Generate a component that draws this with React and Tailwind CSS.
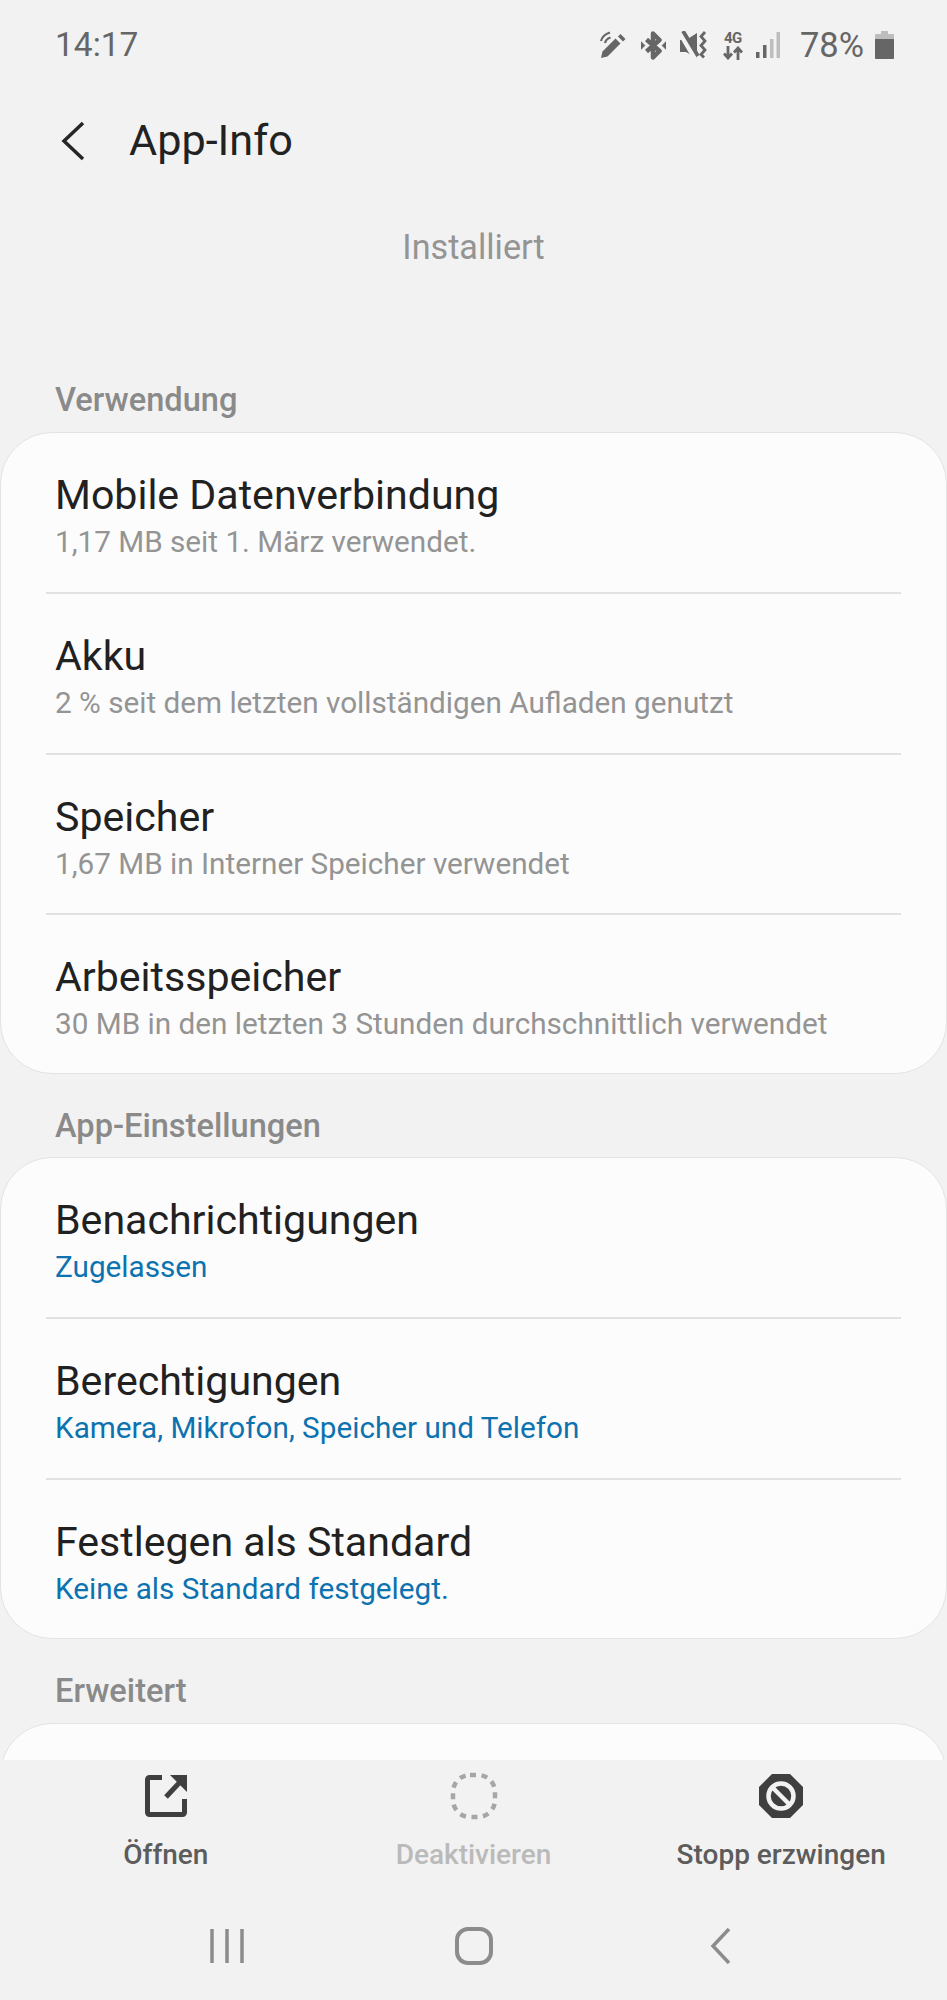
const rows1 = [
  ["Mobile Datenverbindung", "1,17 MB seit 1. März verwendet."],
  ["Akku", "2 % seit dem letzten vollständigen Aufladen genutzt"],
  ["Speicher", "1,67 MB in Interner Speicher verwendet"],
  ["Arbeitsspeicher", "30 MB in den letzten 3 Stunden durchschnittlich verwendet"],
];
const rows2 = [
  ["Benachrichtigungen", "Zugelassen"],
  ["Berechtigungen", "Kamera, Mikrofon, Speicher und Telefon"],
  ["Festlegen als Standard", "Keine als Standard festgelegt."],
];

function Card({ rows, blue }) {
  return (
    <div className="rounded-[52px] border border-[#e3e3e3] bg-[#fcfcfc] px-[54px]">
      {rows.map(([t, s], i) => (
        <div key={t} className={"relative pt-[36px] " + (i < rows.length - 1 ? "h-[160.8px]" : "h-[158px]")}>
          <div className="text-[41.1px] leading-[52px] text-[#212121]">{t}</div>
          <div className={"text-[29.7px] leading-[42px] " + (blue ? "text-[#0d72b0]" : "text-[#949494]")}>{s}</div>
          {i < rows.length - 1 && <div className="absolute bottom-0 left-[-9px] right-[-9px] h-[2px] bg-[#e2e2e2]" />}
        </div>
      ))}
    </div>
  );
}

function Label({ children, className }) {
  return <div className={"px-[55px] text-[32.6px] leading-[40px] font-medium text-[#8a8a8a] " + className}>{children}</div>;
}

function StatusIcons() {
  return (
    <div className="flex items-center">
      <svg width="28" height="28" viewBox="0 0 28 28" className="mr-[13px]" fill="#666">
        <path d="M1 27l1.500-6.500 13-13 5 5-13 13z" />
        <path d="M18 5.500l2.500-2.500 5 5-2.500 2.500z" />
        <path d="M1 10C2 6 5 3 10 1.500" fill="none" stroke="#666" strokeWidth="2.200" />
        <path d="M5 12C5.500 9.500 7.500 7.500 10.500 6.500" fill="none" stroke="#666" strokeWidth="2.200" />
      </svg>
      <svg width="25" height="29" viewBox="0 0 25 29" className="mr-[14px]" fill="none" stroke="#666">
        <path d="M5.500 8.500l13 11.500-6.500 6.500V2.500l6.500 6.500L5.500 20.500" strokeWidth="4.500" strokeLinejoin="round" />
        <path d="M0 10.500l4 4-4 4zM25 10.500l-4 4 4 4z" fill="#666" strokeWidth="0.500" />
      </svg>
      <svg width="28" height="28" viewBox="0 0 28 28" className="mr-[15px]" fill="#666">
        <path d="M0 9h6l11-7v25l-11-6H0z" />
        <path d="M0 0l16 27" stroke="#f2f2f2" strokeWidth="7" />
        <path d="M3 0l15 25" stroke="#666" strokeWidth="3.800" />
        <path d="M25 1l-4 4.500 4 4.500-4 4.500 4 4.500-4 4.500 3 3" fill="none" stroke="#666" strokeWidth="2.800" />
      </svg>
      <div className="mr-[13px] flex w-[20px] flex-col items-center text-[#666]">
        <span className="text-[15px] font-bold leading-[14px] tracking-[-0.5px]">4G</span>
        <svg width="20" height="14" viewBox="0 0 20 14" fill="none" stroke="#666" strokeWidth="2.800" className="mt-[1px]">
          <path d="M5 0v12M1 7.500l4 4.500 4-4.500M15 14V2M11 6.500l4-4.500 4 4.500" />
        </svg>
      </div>
      <svg width="24" height="26" viewBox="0 0 24 26" className="mr-[20px]">
        <rect x="0" y="20" width="3.500" height="6" fill="#666" />
        <rect x="7" y="13" width="3.500" height="13" fill="#666" />
        <rect x="14" y="7" width="3.500" height="19" fill="#bdbdbd" />
        <rect x="20.500" y="0" width="3.500" height="26" fill="#bdbdbd" />
      </svg>
      <span className="mr-[11px] text-[34.5px] leading-[40px] text-[#666]">78%</span>
      <svg width="19" height="28" viewBox="0 0 19 28">
        <path d="M6 0h7v3h5a1 1 0 0 1 1 1v23a1 1 0 0 1-1 1H1a1 1 0 0 1-1-1V4a1 1 0 0 1 1-1h5z" fill="#bdbdbd" />
        <path d="M0 8h19v19a1 1 0 0 1-1 1H1a1 1 0 0 1-1-1z" fill="#666" />
      </svg>
    </div>
  );
}

function Action({ icon, label, cls }) {
  return (
    <div className="flex flex-1 flex-col items-center">
      <div className="flex h-[48px] items-center justify-center">{icon}</div>
      <div className={"mt-[17px] text-[28px] leading-[36px] font-medium " + cls}>{label}</div>
    </div>
  );
}

export default function App() {
  return (
    <div className="flex h-[2000px] w-[947px] flex-col overflow-hidden bg-[#f2f2f2] font-['Roboto',sans-serif]">
      <div className="min-h-0 flex-1 overflow-hidden">
        <div className="flex h-[90px] items-center justify-between pl-[55px] pr-[53px]">
          <span className="text-[33.5px] leading-[40px] text-[#666]">14:17</span>
          <StatusIcons />
        </div>
        <div className="flex h-[102px] items-center pl-[60px]">
          <svg width="26" height="40" viewBox="0 0 26 40" fill="none" stroke="#262626" strokeWidth="3.500">
            <path d="M23 2L4 20l19 18" />
          </svg>
          <span className="ml-[43px] text-[43.2px] leading-[52px] text-[#222]">App-Info</span>
        </div>
        <div className="mt-[33px] text-center text-[34.2px] leading-[44px] text-[#949494]">Installiert</div>
        <Label className="mt-[111px]">Verwendung</Label>
        <div className="mt-[12px]"><Card rows={rows1} /></div>
        <Label className="mt-[32px]">App-Einstellungen</Label>
        <div className="mt-[11px]"><Card rows={rows2} blue /></div>
        <Label className="mt-[32px]">Erweitert</Label>
        <div className="mt-[12px] h-[200px] rounded-[52px] border border-[#e3e3e3] bg-[#fcfcfc]" />
      </div>
      <div className="h-[240px] shrink-0 bg-[#f2f2f2]">
        <div className="flex px-[12px] pt-[12px]">
          <Action
            cls="text-[#5c5c5c]"
            label="Öffnen"
            icon={
              <svg width="42" height="42" viewBox="0 0 42 42" fill="none">
                <path d="M17 2.500H4.500a2 2 0 0 0-2 2v33a2 2 0 0 0 2 2h33a2 2 0 0 0 2-2V24" stroke="#3f3f3f" strokeWidth="5" />
                <path d="M25 0h17v17z" fill="#3f3f3f" />
                <path d="M21 22L35 7" stroke="#3f3f3f" strokeWidth="5" />
              </svg>
            }
          />
          <Action
            cls="text-[#bababa]"
            label="Deaktivieren"
            icon={
              <svg width="48" height="48" viewBox="0 0 48 48" fill="none">
                <rect x="3" y="3" width="42" height="42" rx="17" stroke="#a6a6a6" strokeWidth="4.500" strokeDasharray="6 5.600" />
              </svg>
            }
          />
          <Action
            cls="text-[#5c5c5c]"
            label="Stopp erzwingen"
            icon={
              <svg width="46" height="46" viewBox="0 0 46 46">
                <path d="M14 1h18l13 13v18L32 45H14L1 32V14z" fill="#3f3f3f" />
                <circle cx="23" cy="23" r="12.500" fill="none" stroke="#f2f2f2" strokeWidth="4.500" />
                <path d="M14 14l18 18" stroke="#f2f2f2" strokeWidth="4.500" />
              </svg>
            }
          />
        </div>
        <div className="mt-[54px] grid grid-cols-[247px_247px_247px] items-center justify-center justify-items-center">
          <svg width="34" height="36" viewBox="0 0 34 36" stroke="#8c8c8c" strokeWidth="3.500">
            <path d="M2 1v34M17 1v34M32 1v34" />
          </svg>
          <svg width="38" height="38" viewBox="0 0 38 38" fill="none" stroke="#8c8c8c" strokeWidth="4">
            <rect x="2" y="2" width="34" height="34" rx="11" />
          </svg>
          <svg width="22" height="36" viewBox="0 0 22 36" fill="none" stroke="#8c8c8c" strokeWidth="3.500">
            <path d="M19 1L3 18l16 17" />
          </svg>
        </div>
      </div>
    </div>
  );
}
